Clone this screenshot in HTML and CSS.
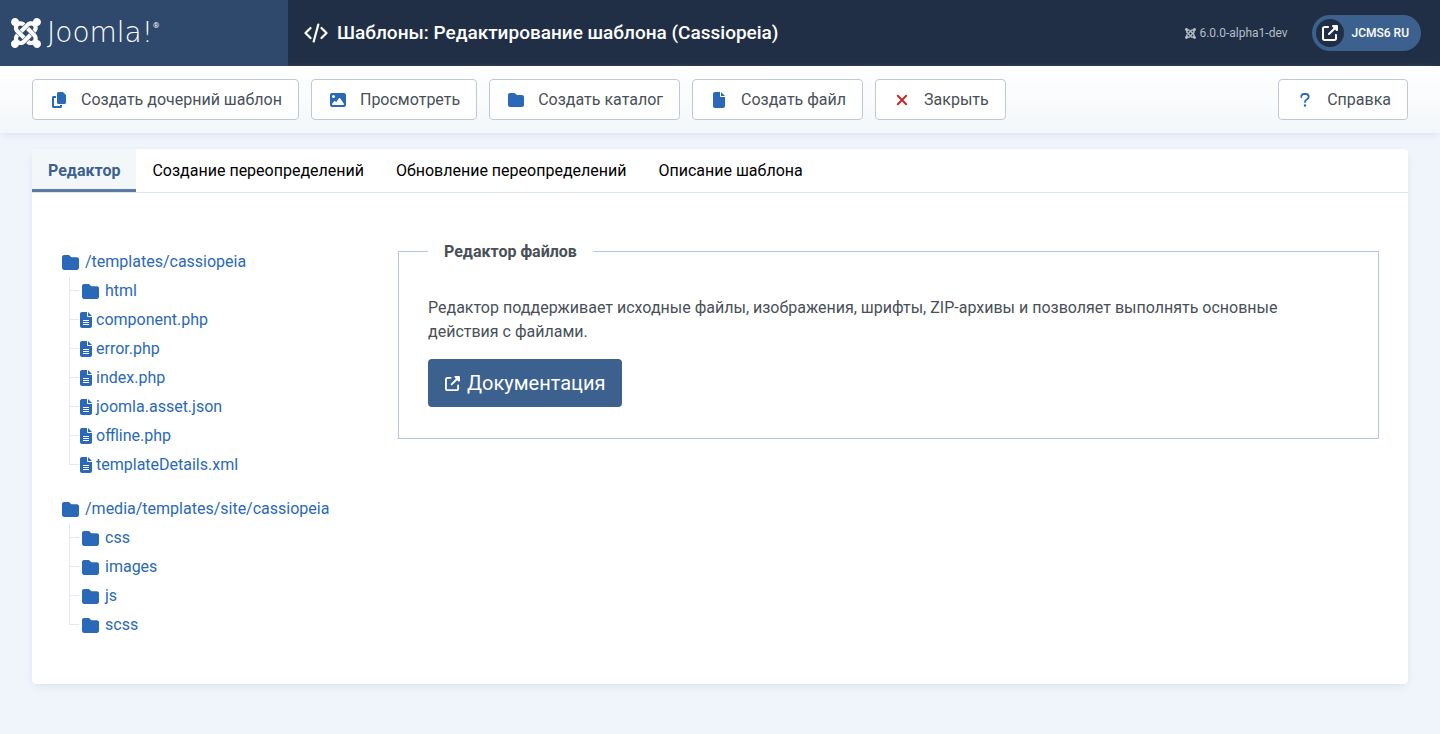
FILE: index.html
```html
<!DOCTYPE html>
<html lang="ru">
<head>
<meta charset="utf-8">
<meta name="viewport" content="width=device-width, initial-scale=1">
<title>Шаблоны: Редактирование шаблона (Cassiopeia)</title>
<link rel="stylesheet" href="styles.css">
</head>
<body>
<svg class="sprite" aria-hidden="true">
  <symbol id="joomla" viewBox="0 32 448 448"><path d="M.6 92.1C.6 58.8 27.4 32 60.4 32c30 0 54.5 21.9 59.2 50.2 32.6-7.6 67.1.6 96.5 30l-44.3 44.3c-20.5-20.5-42.6-16.3-55.4-3.5-14.3 14.3-14.3 37.9 0 52.2l99.5 99.5-44 44.3c-87.7-87.2-49.7-49.7-99.8-99.7-26.8-26.5-35-64.8-24.8-98.9C20.4 144.6.6 120.7.6 92.1zm129.5 116.4l44.3 44.3c10-10 89.7-89.7 99.7-99.8 14.3-14.3 37.6-14.3 51.9 0 12.8 12.8 17 35-3.5 55.4l44 44.3c31.2-31.2 38.5-67.6 28.9-101.2 29.2-4.1 51.9-29.2 51.9-59.5 0-33.2-26.8-60.1-59.8-60.1-30.3 0-55.4 22.5-59.5 51.6-33.8-9.9-71.7-1.5-98.3 25.1-18.3 19.1-71.1 71.5-99.6 99.9zm266.3 152.2c8.2-32.7-.9-68.5-26.3-93.9-11.8-12.2 5 4.7-99.5-99.7l-44.3 44.3 99.7 99.7c14.3 14.3 14.3 37.6 0 51.9-12.8 12.8-35 17-55.4-3.5l-44 44.3c27.6 30.2 68 38.8 102.7 28 5.5 27.4 29.7 48.1 58.9 48.1 33 0 59.8-26.8 59.8-60.1 0-30.2-22.5-55-51.6-59.1zm-84.3-53.1l-44-44.3c-87 86.4-50.4 50.4-99.7 99.8-14.3 14.3-37.6 14.3-51.9 0-13.1-13.4-16.9-35.3 3.2-55.4l-44-44.3c-30.2 30.2-38 65.2-29.5 98.3-26.7 6-46.2 29.9-46.2 58.2C0 453.2 26.8 480 59.8 480c28.6 0 52.5-19.8 58.6-46.7 32.7 8.2 68.5-.6 94.2-26 32.1-32 12.2-12.4 99.5-99.7z"/></symbol>
  <symbol id="folder" viewBox="0 0 512 512"><path d="M64 480H448c35.300 0 64-28.700 64-64V160c0-35.300-28.700-64-64-64H288c-10.100 0-19.600-4.700-25.600-12.800L243.200 57.600C231.100 41.500 212.100 32 192 32H64C28.700 32 0 60.700 0 96V416c0 35.300 28.700 64 64 64z"/></symbol>
  <symbol id="file" viewBox="0 0 384 512"><path d="M0 64C0 28.700 28.700 0 64 0H224V128c0 17.700 14.300 32 32 32H384V448c0 35.300-28.700 64-64 64H64c-35.300 0-64-28.700-64-64V64zm384 64H256V0L384 128z"/></symbol>
  <symbol id="file-lines" viewBox="0 0 384 512"><path fill-rule="evenodd" d="M0 64C0 28.700 28.700 0 64 0H224V128c0 17.700 14.300 32 32 32H384V448c0 35.300-28.700 64-64 64H64c-35.300 0-64-28.700-64-64V64zm384 64H256V0L384 128zM96 256h192v32H96zM96 320h192v32H96zM96 384h192v32H96z"/></symbol>
  <symbol id="copy" viewBox="0 0 448 512"><path d="M208 0H332.100c12.700 0 24.900 5.100 33.900 14.100l67.900 67.900c9 9 14.100 21.200 14.100 33.900V336c0 26.500-21.500 48-48 48H208c-26.500 0-48-21.500-48-48V48c0-26.500 21.500-48 48-48zM48 128h80v64H64V448H256V416h64v48c0 26.500-21.500 48-48 48H48c-26.500 0-48-21.500-48-48V176c0-26.500 21.500-48 48-48z"/></symbol>
  <symbol id="image" viewBox="0 0 512 512"><path d="M0 96C0 60.700 28.700 32 64 32H448c35.300 0 64 28.700 64 64V416c0 35.300-28.700 64-64 64H64c-35.300 0-64-28.700-64-64V96zM323.800 202.500c-4.500-6.600-11.900-10.500-19.800-10.500s-15.400 3.900-19.800 10.500l-87 127.600L170.700 297c-4.600-5.700-11.500-9-18.700-9s-14.200 3.300-18.700 9l-64 80c-5.800 7.200-6.900 17.100-2.900 25.400s12.400 13.600 21.600 13.600H424c8.900 0 17.100-4.900 21.200-12.800s3.600-17.400-1.400-24.700l-120-176zM112 192a48 48 0 1 0 0-96 48 48 0 1 0 0 96z"/></symbol>
  <symbol id="external" viewBox="0 0 512 512"><path d="M352 0c-12.900 0-24.600 7.800-29.600 19.800s-2.200 25.700 6.900 34.900L370.700 96 201.400 265.400c-12.500 12.500-12.500 32.800 0 45.300s32.800 12.500 45.300 0L416 141.300l41.400 41.400c9.200 9.200 22.900 11.900 34.900 6.900s19.800-16.600 19.800-29.600V32c0-17.700-14.300-32-32-32H352zM80 32C35.800 32 0 67.800 0 112V432c0 44.200 35.800 80 80 80H400c44.200 0 80-35.800 80-80V320c0-17.700-14.300-32-32-32s-32 14.300-32 32V432c0 8.800-7.200 16-16 16H80c-8.800 0-16-7.200-16-16V112c0-8.800 7.200-16 16-16H192c17.700 0 32-14.300 32-32s-14.300-32-32-32H80z"/></symbol>
  <symbol id="close" viewBox="0 0 16 16"><path d="M3.800 3.800l8.400 8.400M12.200 3.800l-8.400 8.400" fill="none" stroke="currentColor" stroke-width="2" stroke-linecap="round"/></symbol>
  <symbol id="question" viewBox="0 0 16 16"><path d="M4.300 5V4.500C4.300 3 5.400 2 7 2h1.700c1.700 0 3 1.200 3 2.800 0 1.100-.6 2-1.600 2.500C8.800 8 8 8.500 8 10" fill="none" stroke="currentColor" stroke-width="1.800" stroke-linecap="round"/><circle cx="8" cy="13.500" r="1.200"/></symbol>
  <symbol id="code" viewBox="0 0 24 20"><path d="M6.500 5l-5 5 5 5M17.500 5l5 5-5 5M14.300 1.500L9.700 18.500" fill="none" stroke="currentColor" stroke-width="2.200" stroke-linecap="round" stroke-linejoin="round"/></symbol>
</svg>

<header class="header">
  <a class="brand" href="#" aria-label="Joomla!">
    <svg class="brand-mark"><use href="#joomla"/></svg>
    <span class="brand-name">Joomla!</span><span class="brand-reg">®</span>
  </a>
  <h1 class="page-title"><svg class="title-icon"><use href="#code"/></svg>Шаблоны: Редактирование шаблона (Cassiopeia)</h1>
  <div class="header-tools">
    <span class="version"><svg class="version-icon"><use href="#joomla"/></svg>6.0.0-alpha1-dev</span>
    <a class="site-link" href="#"><span class="site-icon"><svg class="icon"><use href="#external"/></svg></span>JCMS6 RU</a>
  </div>
</header>

<div class="toolbar">
  <button class="tool" type="button"><svg class="icon"><use href="#copy"/></svg>Создать дочерний шаблон</button>
  <button class="tool" type="button"><svg class="icon"><use href="#image"/></svg>Просмотреть</button>
  <button class="tool" type="button"><svg class="icon"><use href="#folder"/></svg>Создать каталог</button>
  <button class="tool" type="button"><svg class="icon"><use href="#file"/></svg>Создать файл</button>
  <button class="tool tool-close" type="button"><svg class="icon"><use href="#close"/></svg>Закрыть</button>
  <button class="tool tool-help" type="button"><svg class="icon"><use href="#question"/></svg>Справка</button>
</div>

<main class="card">
  <div class="tabs" role="tablist">
    <button class="tab tab-active" type="button" role="tab" aria-selected="true">Редактор</button>
    <button class="tab" type="button" role="tab" aria-selected="false">Создание переопределений</button>
    <button class="tab" type="button" role="tab" aria-selected="false">Обновление переопределений</button>
    <button class="tab" type="button" role="tab" aria-selected="false">Описание шаблона</button>
  </div>
  <div class="panel">
    <nav class="trees" aria-label="Файлы шаблона">
      <div class="tree">
        <a class="folder" href="#"><svg class="icon"><use href="#folder"/></svg>/templates/cassiopeia</a>
        <ul class="branch">
          <li><a class="folder" href="#"><svg class="icon"><use href="#folder"/></svg>html</a></li>
          <li><a class="file" href="#"><svg class="icon"><use href="#file-lines"/></svg>component.php</a></li>
          <li><a class="file" href="#"><svg class="icon"><use href="#file-lines"/></svg>error.php</a></li>
          <li><a class="file" href="#"><svg class="icon"><use href="#file-lines"/></svg>index.php</a></li>
          <li><a class="file" href="#"><svg class="icon"><use href="#file-lines"/></svg>joomla.asset.json</a></li>
          <li><a class="file" href="#"><svg class="icon"><use href="#file-lines"/></svg>offline.php</a></li>
          <li><a class="file" href="#"><svg class="icon"><use href="#file-lines"/></svg>templateDetails.xml</a></li>
        </ul>
      </div>
      <div class="tree">
        <a class="folder" href="#"><svg class="icon"><use href="#folder"/></svg>/media/templates/site/cassiopeia</a>
        <ul class="branch">
          <li><a class="folder" href="#"><svg class="icon"><use href="#folder"/></svg>css</a></li>
          <li><a class="folder" href="#"><svg class="icon"><use href="#folder"/></svg>images</a></li>
          <li><a class="folder" href="#"><svg class="icon"><use href="#folder"/></svg>js</a></li>
          <li><a class="folder" href="#"><svg class="icon"><use href="#folder"/></svg>scss</a></li>
        </ul>
      </div>
    </nav>
    <fieldset class="editor">
      <legend>Редактор файлов</legend>
      <p>Редактор поддерживает исходные файлы, изображения, шрифты, ZIP-архивы и позволяет выполнять основные действия с файлами.</p>
      <a class="docs" href="#"><svg class="icon"><use href="#external"/></svg>Документация</a>
    </fieldset>
  </div>
</main>
</body>
</html>
```
FILE: styles.css
```css
* { box-sizing: border-box; }

body {
  margin: 0;
  min-height: 100vh;
  background: #f0f4fb;
  color: #495057;
  font: 400 16px/24px Roboto, "Noto Sans", sans-serif;
}

a { color: inherit; text-decoration: none; }
button { font: inherit; cursor: pointer; }
svg { flex: none; fill: currentColor; }
.sprite { position: absolute; width: 0; height: 0; }
.icon { width: 16px; height: 16px; }

.header {
  display: flex;
  align-items: stretch;
  height: 66px;
  background: #212f46;
  color: #fff;
}
.brand {
  display: flex;
  align-items: center;
  width: 288px;
  padding-left: 11px;
  background: #2f496d;
}
.brand-mark { width: 30px; height: 30px; margin-right: 6px; }
.brand-name { font: 200 28px/32px "DejaVu Sans", sans-serif; }
.brand-reg { align-self: flex-start; padding-top: 20px; font-size: 8px; line-height: 12px; }
.page-title {
  display: flex;
  align-items: center;
  gap: 9px;
  margin: 0;
  padding-left: 16px;
  font-size: 19px;
  font-weight: 500;
}
.title-icon { width: 24px; height: 20px; }
.header-tools {
  display: flex;
  align-items: center;
  gap: 24px;
  margin-left: auto;
  padding-right: 19px;
  font-size: 12px;
}
.version { display: flex; align-items: center; gap: 3px; color: #b5bdc8; }
.version-icon { width: 11px; height: 11px; }
.site-link {
  display: flex;
  align-items: center;
  gap: 8px;
  height: 36px;
  padding: 0 12px 0 4px;
  border-radius: 18px;
  background: #3c618f;
  font-weight: 500;
}
.site-icon {
  display: grid;
  place-items: center;
  width: 28px;
  height: 28px;
  border-radius: 50%;
  background: #212f46;
}

.toolbar {
  display: flex;
  flex-wrap: wrap;
  gap: 12px;
  padding: 13px 32px;
  background: linear-gradient(#fff, #f3f7fa);
  box-shadow: 0 3px 8px -3px #cdd9ea;
}
.tool {
  display: flex;
  align-items: center;
  gap: 14px;
  height: 41px;
  padding: 0 16px 0 18px;
  border: 1px solid #bfc8d7;
  border-radius: 4px;
  background: #fff;
  color: #495057;
}
.tool .icon { color: #2a69b8; }
.tool-close .icon { color: #c52827; }
.tool-help { margin-left: auto; }

.card {
  margin: 16px 32px 50px;
  border-radius: 4px;
  background: #fff;
  box-shadow: 0 3px 10px -3px #cdd9ea;
}
.tabs { display: flex; border-bottom: 1px solid #dce4f0; }
.tab {
  padding: 10px 16px 6px;
  border: 0;
  border-bottom: 3px solid transparent;
  background: none;
  color: #000;
}
.tab-active {
  border-color: #5b7ba6;
  border-top-left-radius: 4px;
  background: #f3f7fa;
  color: #3c618f;
  font-weight: 700;
}
.panel {
  display: grid;
  grid-template-columns: 1fr 3fr;
  gap: 10px;
  align-items: start;
  padding: 45px 29px 47px;
}

.trees {
  display: grid;
  gap: 20px;
  padding: 12px 0 0 1px;
  color: #2a69b8;
}
.folder, .file { display: flex; align-items: center; gap: 6px; }
.folder .icon { width: 17px; height: 17px; }
.file { gap: 4px; }
.file .icon { width: 12px; }
.branch {
  display: grid;
  gap: 5px;
  margin: 0 0 0 7px;
  padding: 5px 0 0;
  list-style: none;
}
.branch li { position: relative; padding-left: 13px; }
.branch .file { margin-left: -2px; }
.branch li::before {
  content: "";
  position: absolute;
  left: 0;
  top: -18px;
  width: 9px;
  height: 29px;
  border: solid #e3e9f3;
  border-width: 0 0 1px 1px;
}
.branch li:first-child::before { top: -2px; height: 13px; }

.editor {
  min-width: 0;
  margin: 0;
  padding: 32px 29px 31px;
  border: 1px solid #b5c6e0;
}
.editor legend { padding: 2px 16px 0; font-weight: 700; }
.editor p { margin: 0 0 15px; }
.docs {
  display: inline-flex;
  align-items: center;
  gap: 7px;
  height: 48px;
  padding: 0 17px;
  border-radius: 4px;
  background: #3c618f;
  color: #fff;
  font-size: 20px;
  vertical-align: top;
}
.docs .icon { width: 15px; height: 15px; }
```
